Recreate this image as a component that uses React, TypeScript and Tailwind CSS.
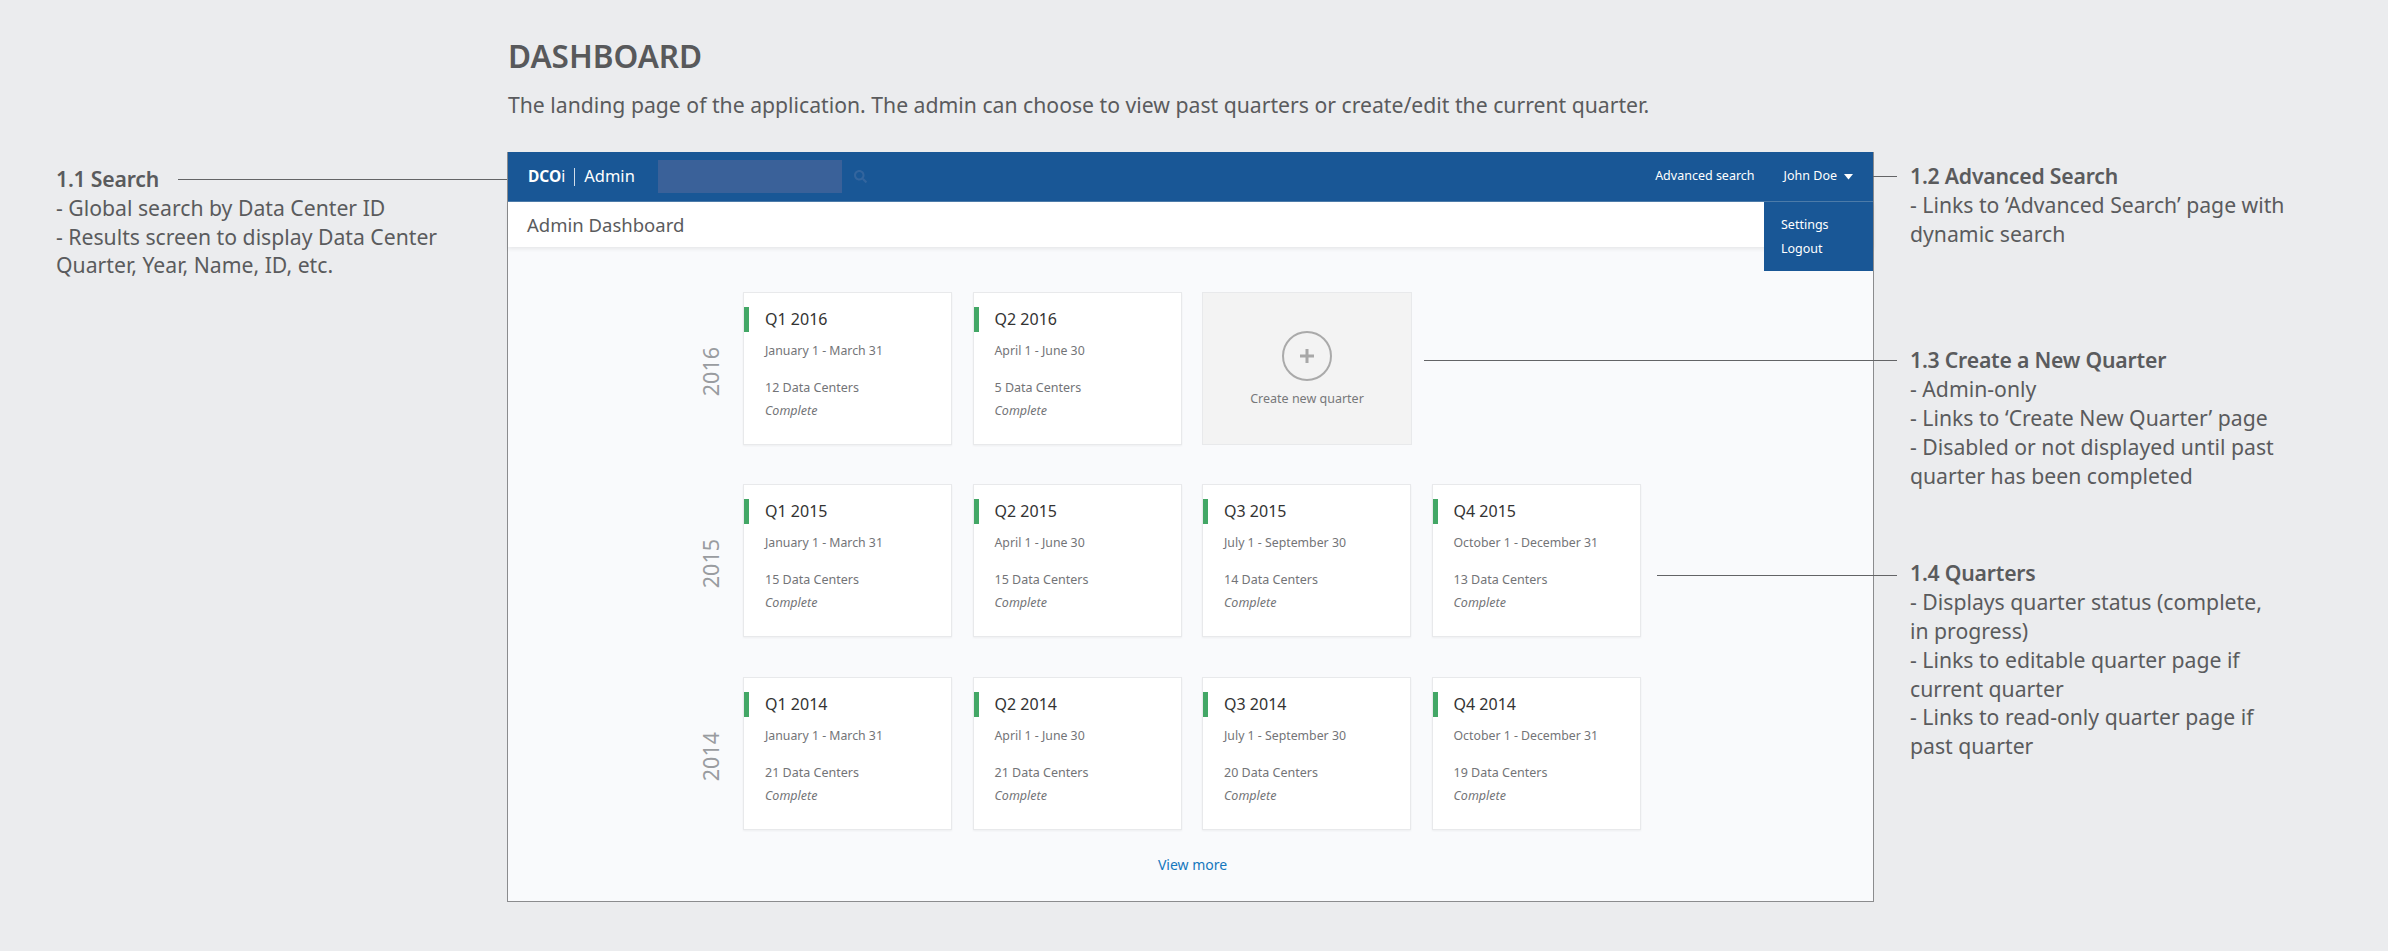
import { FaSearch } from "react-icons/fa";

const years = [
  { year: "2016", c: ["12", "5"], create: true, top: "" },
  { year: "2015", c: ["15", "15", "14", "13"], top: "mt-[39px]" },
  { year: "2014", c: ["21", "21", "20", "19"], top: "mt-[40px]" },
];
const ranges = ["January 1 - March 31", "April 1 - June 30", "July 1 - September 30", "October 1 - December 31"];

function Card({ q, year, count }: { q: number; year: string; count: string }) {
  return (
    <div className="w-[209px] h-[153px] bg-white border border-[#e8e9eb] shadow-[0_1px_2px_rgba(0,0,0,0.05)] flex shrink-0">
      <div className="w-[5px] h-[25px] mt-[14px] bg-[#43a766] shrink-0" />
      <div className="pl-[16px] flex flex-col">
        <div className="mt-[14px] h-[24px] leading-[24px] text-[16px] text-[#333333]">Q{q} {year}</div>
        <div className="mt-[11px] h-[18px] leading-[18px] text-[12.300px] text-[#737477]">{ranges[q - 1]}</div>
        <div className="mt-[19px] h-[18px] leading-[18px] text-[12.500px] text-[#737477]">{count} Data Centers</div>
        <div className="mt-[5px] h-[18px] leading-[18px] text-[12.500px] italic text-[#737477]">Complete</div>
      </div>
    </div>
  );
}

function CreateCard() {
  return (
    <div className="w-[210px] h-[153px] bg-[#f3f3f3] border border-[#e8e9eb] flex flex-col items-center shrink-0">
      <div className="mt-[38px] w-[50px] h-[50px] rounded-full border-2 border-[#aaaaaa] flex items-center justify-center">
        <svg width="16" height="16" viewBox="0 0 16 16"><path d="M8 1v14M1 8h14" stroke="#a8a8a8" strokeWidth="3" /></svg>
      </div>
      <div className="mt-[9px] h-[18px] leading-[18px] text-[12.500px] text-[#77787a]">Create new quarter</div>
    </div>
  );
}

function Note({ title, lines, className, line }: { title: string; lines: string[]; className: string; line?: string }) {
  return (
    <div className={`relative text-[21.200px] leading-[28.800px] text-[#5a5b5d] ${className}`}>
      {line ? <div className={`absolute h-px bg-[#636466] ${line}`} /> : null}
      <div className="font-semibold tracking-[-0.2px] whitespace-nowrap">{title}</div>
      {lines.map((l) => (
        <div key={l} className="whitespace-nowrap">{l}</div>
      ))}
    </div>
  );
}

export default function App() {
  return (
    <div className="w-[2388px] h-[951px] bg-[#ebecee] flex overflow-hidden font-['Noto_Sans',sans-serif] text-[#58595b]">
      <div className="w-[507px] pl-[56px] pt-[165px] shrink-0">
        <Note
          title="1.1 Search"
          lines={["- Global search by Data Center ID", "- Results screen to display Data Center", "Quarter, Year, Name, ID, etc."]}
          className=""
          line="top-[14px] left-[122px] w-[329px]"
        />
      </div>

      <div className="w-[1367px] shrink-0 flex flex-col">
        <div className="h-[152px] pl-[1px] pt-[35px]">
          <h1 className="h-[42px] leading-[42px] text-[31.500px] font-semibold text-[#58595b]">DASHBOARD</h1>
          <p className="mt-[13px] h-[30px] leading-[30px] text-[21.200px] text-[#5a5b5d] whitespace-nowrap">
            The landing page of the application. The admin can choose to view past quarters or create/edit the current quarter.
          </p>
        </div>

        <div className="relative h-[750px] border-x border-b border-[#8b8c8e] bg-[#f9fafc] flex flex-col">
          <div className="h-[50px] shrink-0 bg-[#195796] border-b border-[#4d7cab] flex items-center text-white pl-[20px] pr-[20px]">
            <div className="flex items-center text-[15.500px] w-[130px]">
              <span className="font-bold">DCO</span>
              <span>i</span>
              <span className="mx-[9px] h-[18px] w-px bg-white/80" />
              <span className="text-[16.500px]">Admin</span>
            </div>
            <div className="w-[184px] h-[33px] bg-[#3a6199]" />
            <FaSearch className="ml-[12px] text-[#33659e]" size={13} />
            <div className="ml-auto text-[12.500px]">Advanced search</div>
            <div className="ml-[29px] text-[12.500px]">John Doe</div>
            <svg className="ml-[7px]" width="9" height="6" viewBox="0 0 9 6"><path d="M0 0h9L4.500 5.500z" fill="#fff" /></svg>
          </div>

          <div className="h-[45px] shrink-0 bg-white shadow-[0_2px_4px_rgba(0,0,0,0.08)] flex items-center pl-[19px] text-[18.500px] text-[#5a5b5d]">
            Admin Dashboard
          </div>

          <div className="absolute right-0 top-[50px] w-[109px] h-[69px] bg-[#195796] pl-[17px] pt-[11px] text-[12.500px] leading-[24px] text-white">
            <div>Settings</div>
            <div>Logout</div>
          </div>

          <div className="pt-[45px] flex flex-col">
            {years.map((y) => (
              <div key={y.year} className={`flex ${y.top}`}>
                <div className="w-[235px] shrink-0 flex items-center justify-end pr-[20px] pt-[6px]">
                  <span className="[writing-mode:vertical-rl] rotate-180 text-[21.500px] leading-[24px] text-[#999ca0]">{y.year}</span>
                </div>
                <div className="flex gap-[20.500px]">
                  {y.c.map((count, i) => (
                    <Card key={i} q={i + 1} year={y.year} count={count} />
                  ))}
                  {y.create ? <CreateCard /> : null}
                </div>
              </div>
            ))}
          </div>
          <div className="mt-[25px] text-center text-[14px] leading-[20px] text-[#1577bd] pl-[4px]">View more</div>
        </div>
      </div>

      <div className="flex-1 pl-[36px] pt-[162px]">
        <Note
          title="1.2 Advanced Search"
          lines={["- Links to ‘Advanced Search’ page with", "dynamic search"]}
          className=""
          line="top-[14px] right-full mr-[13px] w-[24px]"
        />
        <Note
          title="1.3 Create a New Quarter"
          lines={[
            "- Admin-only",
            "- Links to ‘Create New Quarter’ page",
            "- Disabled or not displayed until past",
            "quarter has been completed",
          ]}
          className="mt-[98px]"
          line="top-[14px] right-full mr-[13px] w-[473px]"
        />
        <Note
          title="1.4 Quarters"
          lines={[
            "- Displays quarter status (complete,",
            "in progress)",
            "- Links to editable quarter page if",
            "current quarter",
            "- Links to read-only quarter page if",
            "past quarter",
          ]}
          className="mt-[69px]"
          line="top-[16px] right-full mr-[13px] w-[240px]"
        />
      </div>
    </div>
  );
}
